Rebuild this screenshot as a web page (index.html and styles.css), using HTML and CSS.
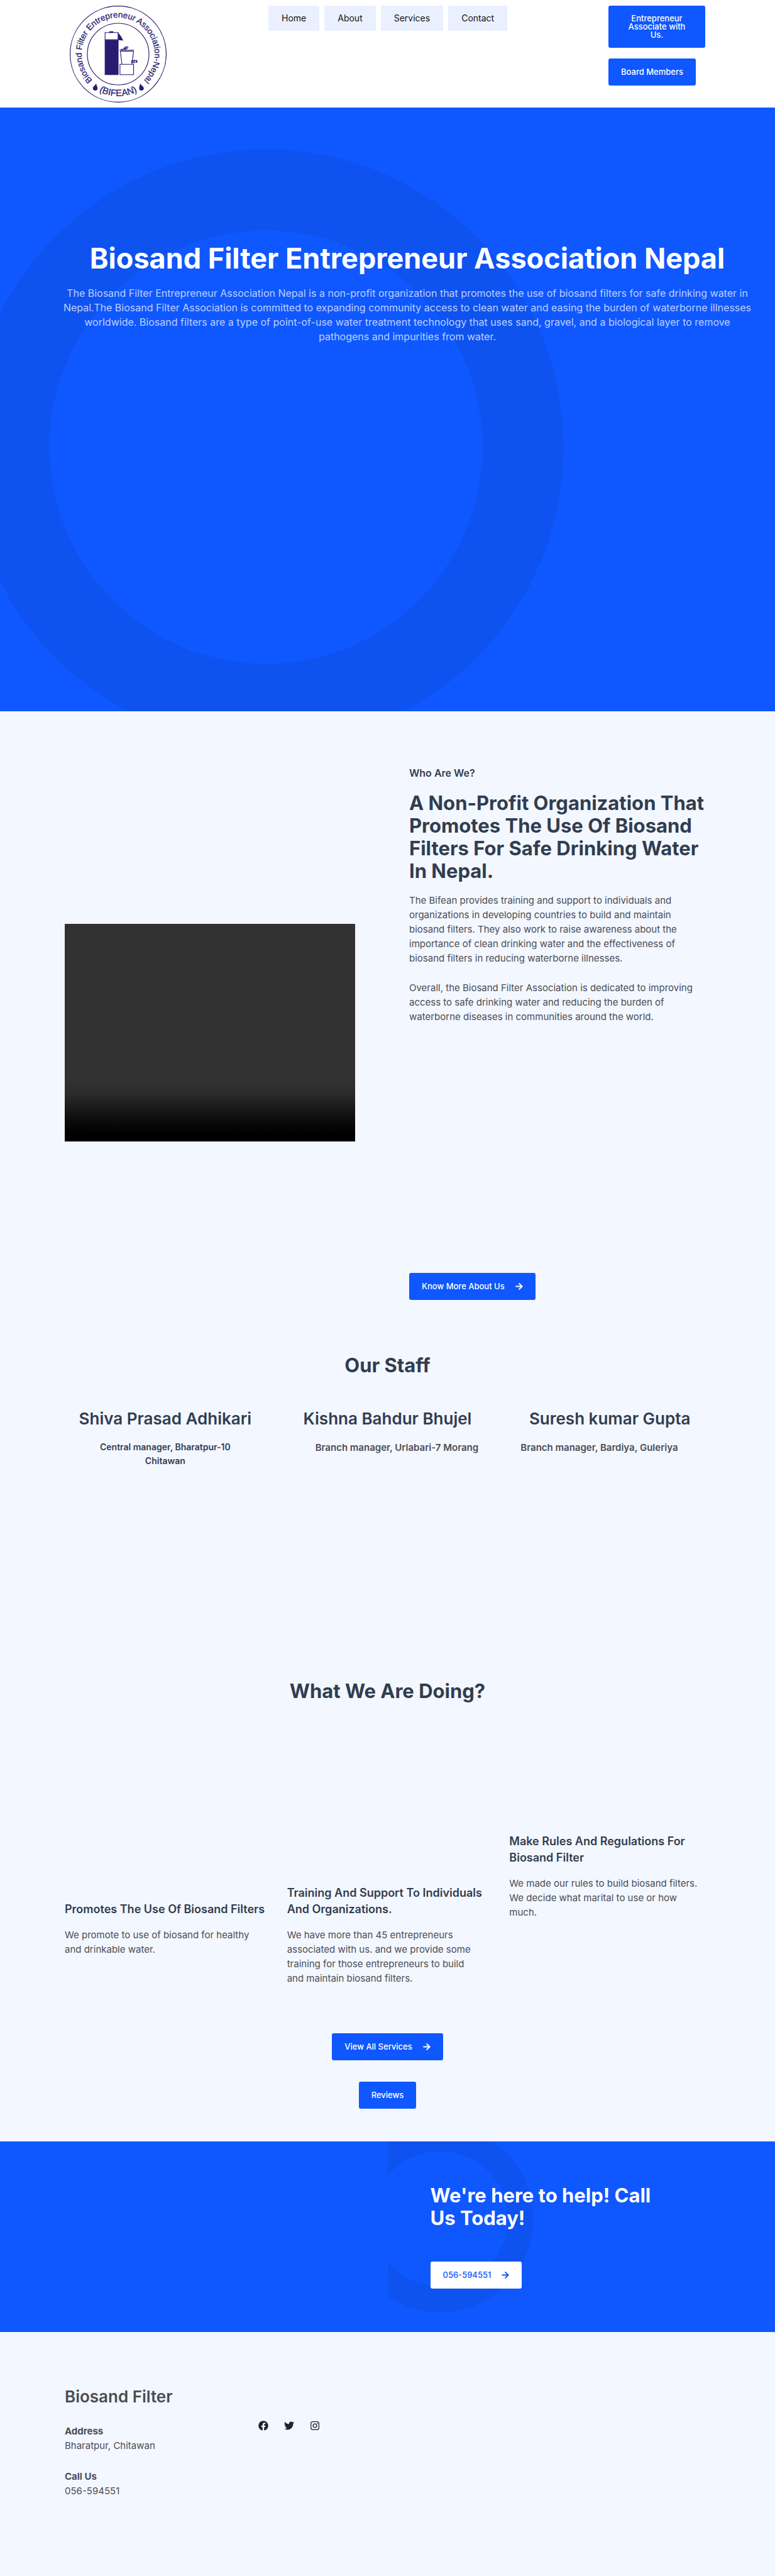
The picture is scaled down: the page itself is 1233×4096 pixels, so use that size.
FILE: index.html
```html
<!DOCTYPE html>
<html lang="en">
<head>
<meta charset="utf-8">
<meta name="viewport" content="width=device-width, initial-scale=1">
<title>Biosand Filter Entrepreneur Association Nepal</title>
<link rel="stylesheet" href="styles.css">
</head>
<body>
<svg width="0" height="0" class="sprite" aria-hidden="true">
  <symbol id="arrow" viewBox="0 0 448 512"><path d="M190.500 66.900l22.200-22.200c9.400-9.400 24.600-9.400 33.900 0L441 239c9.400 9.400 9.400 24.600 0 33.900L246.600 467.300c-9.400 9.400-24.600 9.400-33.900 0l-22.200-22.200c-9.500-9.500-9.300-25 .4-34.300L311.400 296H24c-13.300 0-24-10.700-24-24v-32c0-13.300 10.700-24 24-24h287.400L190.900 101.200c-9.800-9.300-10-24.800-.4-34.300z"/></symbol>
</svg>

<header class="header">
  <a class="logo" href="#" aria-label="BIFEAN home">
    <svg viewBox="60 30 540 540" fill="none" stroke="#2a1b72" stroke-width="4">
      <defs>
        <path id="ring-top" d="M207 463A204 204 0 1 1 453 463"/>
        <path id="ring-bottom" d="M168 470A235 235 0 0 0 492 470"/>
      </defs>
      <circle cx="330" cy="300" r="268"/>
      <circle cx="330" cy="300" r="172"/>
      <g class="logo-text">
        <text font-size="47"><textPath href="#ring-top" startOffset="50%" text-anchor="middle">Biosand Filter Entrepreneur Association-Nepal</textPath></text>
        <text font-size="52"><textPath href="#ring-bottom" startOffset="50%" text-anchor="middle">(BIFEAN)</textPath></text>
      </g>
      <path d="M257 180h73v42h-73z"/>
      <path d="M257 218h73" stroke-dasharray="3 3"/>
      <path d="M257 224h73v191h-73zM283 175h18v5h-18zM331 185l13 17 11 20-24-3z" fill="#2a1b72"/>
      <path d="M337 278h82M340 284h76M342 284l9 72M416 284l-9 72M340 357h76v58h-76zM345 276l14-5M360 272c5-12 17-16 25-11-2 10-14 14-25 11M365 271l14-8"/>
      <path d="M405 334v16M412 337h8v-4M412 348h8M420 331v20M430 334v14M420 336h15v9h-8M414 337v10"/>
      <path d="M207 463c1 12 8 17 8 27a13 13 0 0 1-26 0c0-10 13-14 18-27zM453 463c-1 12-6 17-6 27a13 13 0 0 0 26 0c0-10-15-14-20-27z" fill="#2a1b72" stroke="none"/>
    </svg>
  </a>
  <nav class="nav">
    <a href="#">Home</a>
    <a href="#about">About</a>
    <a href="#services">Services</a>
    <a href="#contact">Contact</a>
  </nav>
  <div class="header-actions">
    <button class="btn btn-tall" type="button">Entrepreneur Associate with Us.</button>
    <button class="btn" type="button">Board Members</button>
  </div>
</header>

<main>
  <section class="hero">
    <h1>Biosand Filter Entrepreneur Association Nepal</h1>
    <p>The Biosand Filter Entrepreneur Association Nepal is a non-profit organization that promotes the use of biosand filters for safe drinking water in Nepal.The Biosand Filter Association is committed to expanding community access to clean water and easing the burden of waterborne illnesses worldwide. Biosand filters are a type of point-of-use water treatment technology that uses sand, gravel, and a biological layer to remove pathogens and impurities from water.</p>
  </section>

  <section class="about" id="about">
    <div class="video"></div>
    <div>
      <h3 class="eyebrow">Who Are We?</h3>
      <h2 class="title">A Non-Profit Organization That Promotes The Use Of Biosand Filters For Safe Drinking Water In Nepal.</h2>
      <div class="about-text">
        <p>The Bifean provides training and support to individuals and organizations in developing countries to build and maintain biosand filters. They also work to raise awareness about the importance of clean drinking water and the effectiveness of biosand filters in reducing waterborne illnesses.</p>
        <p>Overall, the Biosand Filter Association is dedicated to improving access to safe drinking water and reducing the burden of waterborne diseases in communities around the world.</p>
      </div>
      <button class="btn" type="button">Know More About Us <svg class="arrow"><use href="#arrow"/></svg></button>
    </div>
  </section>

  <section class="staff">
    <h2 class="title centered">Our Staff</h2>
    <div class="columns">
      <article>
        <h3>Shiva Prasad Adhikari</h3>
        <p class="role-main">Central manager, Bharatpur-10 Chitawan</p>
      </article>
      <article>
        <h3>Kishna Bahdur Bhujel</h3>
        <p class="role role-inset">Branch manager, Urlabari-7 Morang</p>
      </article>
      <article>
        <h3>Suresh kumar Gupta</h3>
        <p class="role">Branch manager, Bardiya, Guleriya</p>
      </article>
    </div>
  </section>

  <section class="services" id="services">
    <h2 class="title centered">What We Are Doing?</h2>
    <div class="columns">
      <article class="service drop-large">
        <h3>Promotes The Use Of Biosand Filters</h3>
        <p>We promote to use of biosand for healthy and drinkable water.</p>
      </article>
      <article class="service drop-medium">
        <h3>Training And Support To Individuals And Organizations.</h3>
        <p>We have more than 45 entrepreneurs associated with us. and we provide some training for those entrepreneurs to build and maintain biosand filters.</p>
      </article>
      <article class="service">
        <h3>Make Rules And Regulations For Biosand Filter</h3>
        <p>We made our rules to build biosand filters. We decide what marital to use or how much.</p>
      </article>
    </div>
    <div class="service-actions">
      <button class="btn" type="button">View All Services <svg class="arrow"><use href="#arrow"/></svg></button>
      <button class="btn" type="button">Reviews</button>
    </div>
  </section>

  <section class="cta" id="contact">
    <div class="cta-body">
      <h2 class="title">We're here to help! Call Us Today!</h2>
      <a class="btn btn-light" href="tel:056-594551">056-594551 <svg class="arrow"><use href="#arrow"/></svg></a>
    </div>
  </section>
</main>

<footer class="footer">
  <div>
    <h2>Biosand Filter</h2>
    <address>
      <p><strong>Address</strong><br>Bharatpur, Chitawan</p>
      <p><strong>Call Us</strong><br>056-594551</p>
    </address>
  </div>
  <div class="social">
    <a href="#" aria-label="Facebook"><svg viewBox="0 0 512 512"><path d="M504 256C504 119 393 8 256 8S8 119 8 256c0 123.780 90.690 226.380 209.250 245V327.690h-63V256h63v-54.640c0-62.150 37-96.480 93.670-96.480 27.140 0 55.520 4.840 55.520 4.840v61h-31.280c-30.800 0-40.410 19.120-40.410 38.730V256h68.780l-11 71.690h-57.780V501C413.310 482.380 504 379.780 504 256z"/></svg></a>
    <a href="#" aria-label="Twitter"><svg viewBox="0 0 512 512"><path d="M459.370 151.716c.325 4.548.325 9.097.325 13.645 0 138.720-105.583 298.558-298.558 298.558-59.452 0-114.680-17.219-161.137-47.106 8.447.974 16.568 1.299 25.340 1.299 49.055 0 94.213-16.568 130.274-44.832-46.132-.975-84.792-31.188-98.112-72.772 6.498.974 12.995 1.624 19.818 1.624 9.421 0 18.843-1.300 27.614-3.573-48.081-9.747-84.143-51.980-84.143-102.985v-1.299c13.969 7.797 30.214 12.670 47.431 13.319-28.264-18.843-46.781-51.005-46.781-87.391 0-19.492 5.197-37.360 14.294-52.954 51.655 63.675 129.300 105.258 216.365 109.807-1.624-7.797-2.599-15.918-2.599-24.040 0-57.828 46.782-104.934 104.934-104.934 30.213 0 57.502 12.670 76.670 33.137 23.715-4.548 46.456-13.320 66.599-25.340-7.798 24.366-24.366 44.833-46.132 57.827 21.117-2.273 41.584-8.122 60.426-16.243-14.292 20.791-32.161 39.308-52.628 54.253z"/></svg></a>
    <a href="#" aria-label="Instagram"><svg viewBox="0 0 512 512"><g fill="none" stroke="#1f2430" stroke-width="42"><rect x="53" y="53" width="406" height="406" rx="100"/><circle cx="256" cy="256" r="94"/></g><circle cx="376" cy="136" r="27"/></svg></a>
  </div>
</footer>
</body>
</html>
```
FILE: styles.css
```css
:root {
  --blue: #0f57ff;
  --ring: #0e52ef;
  --page: #f3f7ff;
  --heading: #313d4f;
  --text: #4a4d55;
  --gutter: 103px;
}

* { box-sizing: border-box; }

body {
  margin: 0;
  background: var(--page);
  color: var(--text);
  font: 15px/23px Inter, "Liberation Sans", sans-serif;
}

h1, h2, h3, p, address { margin: 0; }

address { font-style: normal; }

a { color: inherit; text-decoration: none; }

.sprite { display: block; }

.title {
  color: var(--heading);
  font-size: 31px;
  line-height: 36px;
  font-weight: 700;
}

.centered { text-align: center; }

.columns {
  display: grid;
  grid-template-columns: repeat(3, 1fr);
  gap: 34px;
}

.btn {
  display: inline-flex;
  align-items: center;
  justify-content: center;
  gap: 17px;
  min-height: 43px;
  padding: 0 20px;
  border: 0;
  border-radius: 3px;
  background: var(--blue);
  color: #fff;
  font: 500 13px/13px Inter, "Liberation Sans", sans-serif;
}

.btn-light { background: #fff; color: var(--blue); }

.arrow { width: 12px; height: 13px; fill: currentColor; }

/* Header */
.header {
  display: grid;
  grid-template-columns: 324px 1fr 154px;
  align-items: start;
  padding: 9px 111px 8px;
  background: #fff;
}

.logo { display: block; width: 154px; height: 154px; }

.logo svg { display: block; width: 100%; height: 100%; }

.logo-text {
  fill: #2a1b72;
  stroke: #2a1b72;
  stroke-width: 1px;
  font-family: "Liberation Sans", sans-serif;
}

.nav { display: flex; gap: 8px; margin-left: -8px; }

.nav a {
  padding: 0 21px;
  background: #eaf0ff;
  color: #111;
  font-size: 14px;
  line-height: 40px;
}

.header-actions {
  display: flex;
  flex-direction: column;
  align-items: flex-start;
  gap: 17px;
}

.btn-tall { min-height: 67px; }

/* Hero */
.hero {
  padding: 212px 32px 584px 95px;
  background:
    radial-gradient(circle at 423px 540px, transparent 344px, var(--ring) 345px, var(--ring) 473px, transparent 474px)
    var(--blue);
  color: #bdd0ff;
  text-align: center;
}

.hero h1 {
  margin-bottom: 16px;
  color: #fff;
  font-size: 45px;
  line-height: 56px;
  font-weight: 700;
}

.hero p { font-size: 16px; }

/* About */
.about {
  display: grid;
  grid-template-columns: 462fr 479fr;
  gap: 86px;
  align-items: center;
  padding: 86px var(--gutter);
}

.video {
  aspect-ratio: 4 / 3;
  background: linear-gradient(#323232 72%, #2b2b2b 78%, #0c0c0c 90%, #000 97%);
}

.eyebrow {
  margin-bottom: 18px;
  color: var(--heading);
  font-size: 16px;
  line-height: 24px;
  font-weight: 600;
}

.about-text {
  display: grid;
  gap: 24px;
  padding: 17px 19px 396px 0;
}

/* Staff */
.staff { padding: 0 var(--gutter) 337px; }

.staff .columns { margin-top: 51px; }

.staff h3 {
  margin-bottom: 18px;
  color: var(--heading);
  font-size: 26px;
  line-height: 32px;
  font-weight: 600;
  text-align: center;
}

.role-main {
  padding: 0 50px;
  color: var(--heading);
  font-size: 14px;
  line-height: 22px;
  font-weight: 600;
  text-align: center;
}

.role { padding-left: 18px; font-weight: 600; white-space: nowrap; }

.role-inset { padding-left: 45px; }

/* Services */
.services { padding: 0 var(--gutter) 52px; }

.services .columns { margin-top: 208px; }

.service h3 {
  margin-bottom: 16px;
  color: var(--heading);
  font-size: 18px;
  line-height: 26px;
  font-weight: 600;
  white-space: normal;
}

.service p { padding-right: 14px; }

.drop-medium { padding-top: 82px; }

.drop-large { padding-top: 108px; }

.service-actions {
  display: flex;
  flex-direction: column;
  align-items: center;
  gap: 34px;
  margin-top: 76px;
}

/* Call to action */
.cta { padding-left: 50%; background: var(--blue); }

.cta-body {
  padding: 68px 170px 69px 68px;
  background: radial-gradient(circle at 83px 123px, transparent 107px, var(--ring) 108px, var(--ring) 148px, transparent 149px);
}

.cta .title { margin-bottom: 51px; color: #fff; }

/* Footer */
.footer {
  display: grid;
  grid-template-columns: 308px 1fr;
  padding: 87px var(--gutter) 124px;
}

.footer h2 {
  margin-bottom: 27px;
  color: #4a4d50;
  font-size: 26px;
  line-height: 32px;
  font-weight: 600;
}

.footer address { display: grid; gap: 26px; }

.social { display: flex; gap: 25px; padding-top: 54px; }

.social svg { display: block; width: 16px; height: 16px; fill: #1f2430; }
```
